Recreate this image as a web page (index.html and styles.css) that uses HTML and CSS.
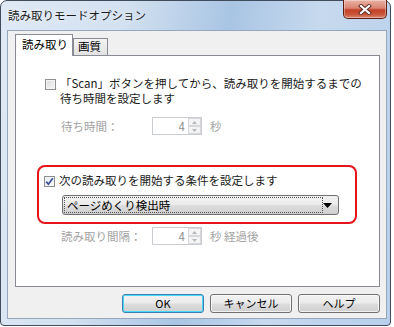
FILE: index.html
```html
<!DOCTYPE html>
<html lang="ja">
<head>
<meta charset="utf-8">
<link rel="stylesheet" href="styles.css">
</head>
<body>
<div class="window">
  <div class="titlebar">
    <span class="title">読み取りモードオプション</span>
    <div class="close">
      <svg width="14" height="11" viewBox="0 0 14 11">
        <path d="M3 2 L11 9 M11 2 L3 9" stroke="#5a2a22" stroke-width="4" stroke-linecap="square"/>
        <path d="M3 2 L11 9 M11 2 L3 9" stroke="#ffffff" stroke-width="2.2" stroke-linecap="square"/>
      </svg>
    </div>
  </div>
  <div class="client">
    <div class="tabs">
      <div class="tab active">読み取り</div>
      <div class="tab">画質</div>
    </div>
    <div class="panel">
      <div class="check-row">
        <span class="cb"></span>
        <span class="cb-label">「Scan」ボタンを押してから、読み取りを開始するまでの<br>待ち時間を設定します</span>
      </div>
      <div class="field">
        <span class="field-label">待ち時間：</span>
        <div class="spin">
          <span class="val">4</span>
          <div class="spin-btns">
            <span class="sb"><svg width="5" height="3" viewBox="0 0 5 3"><path d="M0 3 L2.5 0 L5 3Z" fill="#b5b8bd"/></svg></span>
            <span class="sb"><svg width="5" height="3" viewBox="0 0 5 3"><path d="M0 0 L2.5 3 L5 0Z" fill="#b5b8bd"/></svg></span>
          </div>
        </div>
        <span class="unit">秒</span>
      </div>
      <div class="highlight">
        <div class="check-row">
          <span class="cb checked">
            <svg width="9" height="9" viewBox="0 0 9 9"><path d="M1.2 4.6 L3.4 7.2 L7.8 1.2" fill="none" stroke="#3d5196" stroke-width="1.7"/></svg>
          </span>
          <span class="cb-label">次の読み取りを開始する条件を設定します</span>
        </div>
        <div class="select">
          <span class="focus">ページめくり検出時</span>
          <svg class="arrow" width="9" height="5" viewBox="0 0 9 5"><path d="M0 0 L9 0 L4.5 5Z" fill="#000"/></svg>
        </div>
      </div>
      <div class="field field2">
        <span class="field-label">読み取り間隔：</span>
        <div class="spin">
          <span class="val">4</span>
          <div class="spin-btns">
            <span class="sb"><svg width="5" height="3" viewBox="0 0 5 3"><path d="M0 3 L2.5 0 L5 3Z" fill="#b5b8bd"/></svg></span>
            <span class="sb"><svg width="5" height="3" viewBox="0 0 5 3"><path d="M0 0 L2.5 3 L5 0Z" fill="#b5b8bd"/></svg></span>
          </div>
        </div>
        <span class="unit">秒 経過後</span>
      </div>
    </div>
    <div class="buttons">
      <div class="btn default">OK</div>
      <div class="btn">キャンセル</div>
      <div class="btn">ヘルプ</div>
    </div>
  </div>
</div>
</body>
</html>
```

FILE: styles.css
```css
* { box-sizing: border-box; }

body {
  margin: 0;
  width: 394px;
  height: 327px;
  background: #ffffff;
  font-family: "Noto Sans CJK JP", "Noto Sans", sans-serif;
  font-size: 11.5px;
  color: #000;
}

.window {
  width: 391px;
  height: 326px;
  border: 1px solid #404b5c;
  border-radius: 7px 7px 4px 4px;
  background:
    linear-gradient(100deg, #dfe9f5 0%, #d3e1f0 28%, #a9c5e4 52%, #c6d9ee 72%, #b7cfea 100%);
  display: flex;
  flex-direction: column;
}

.titlebar {
  height: 29px;
  display: flex;
  align-items: center;
}

.title {
  margin-left: 7px;
  font-size: 11.5px;
  line-height: 15px;
  color: #1a1a1a;
  text-shadow: 0 0 5px rgba(255,255,255,0.9);
}

.close {
  margin-left: auto;
  margin-right: 3px;
  align-self: flex-start;
  margin-top: -1px;
  width: 44px;
  height: 19px;
  border: 1px solid #5e1c12;
  border-top: none;
  border-radius: 0 0 5px 5px;
  background: linear-gradient(#eab1a3 0%, #d98571 45%, #c24128 55%, #c9553b 80%, #dc8a72 100%);
  display: flex;
  align-items: center;
  justify-content: center;
  box-shadow: inset 0 0 0 1px rgba(255,255,255,0.35);
}

.client {
  margin-left: 6px;
  width: 380px;
  height: 289px;
  background: #f0f0f0;
  border: 1px solid #95a6bd;
  padding: 3px 0 0 7px;
  display: flex;
  flex-direction: column;
}

.tabs {
  display: flex;
  align-items: flex-end;
  height: 22px;
  position: relative;
  z-index: 1;
  margin-bottom: -1px;
}

.tab {
  height: 17px;
  padding: 0 6px 0 4px;
  border: 1px solid #898c95;
  border-bottom: none;
  background: linear-gradient(#f3f3f3, #e2e2e2);
  line-height: 15px;
  margin-bottom: 1px;
}

.tab.active {
  height: 22px;
  width: 58px;
  padding: 0 0 0 6px;
  background: #ffffff;
  margin-bottom: 0;
  line-height: 18px;
}

.panel {
  width: 365px;
  height: 232px;
  background: #ffffff;
  border: 1px solid #898c95;
  padding: 20px 0 0 29px;
  display: flex;
  flex-direction: column;
}

.check-row {
  display: flex;
  align-items: flex-start;
  line-height: 15px;
}

.cb {
  width: 11px;
  height: 11px;
  margin-top: 3px;
  margin-right: 4px;
  border: 1px solid #8e8f8f;
  background: linear-gradient(135deg, #dcdcdc, #f6f6f6);
  box-shadow: inset 0 0 0 1px #f4f4f4;
  display: flex;
  align-items: center;
  justify-content: center;
  flex: none;
}

.cb.checked {
  background: linear-gradient(135deg, #e8ecf3, #fbfbfb);
}

.cb-label {
  color: #1a1a1a;
}

.field {
  display: flex;
  align-items: center;
  margin-top: 11px;
  margin-left: 16px;
  color: #a3a3a3;
  height: 18px;
}

.field2 {
  margin-top: 3px;
}

.field-label {
  width: 91px;
}

.spin {
  width: 50px;
  height: 18px;
  border: 1px solid #c9ccd1;
  background: #ffffff;
  display: flex;
  align-items: stretch;
}

.val {
  flex: 1;
  text-align: right;
  padding-right: 3px;
  line-height: 16px;
  color: #8f8f8f;
}

.spin-btns {
  width: 13px;
  display: flex;
  flex-direction: column;
}

.sb {
  flex: 1;
  border: 1px solid #d6d8dc;
  background: #f4f4f4;
  display: flex;
  align-items: center;
  justify-content: center;
}

.unit {
  margin-left: 8px;
}

.highlight {
  margin-top: 30px;
  margin-left: -8px;
  width: 320px;
  height: 59px;
  border: 2px solid #e8141c;
  border-radius: 8px;
  padding: 6px 0 0 5px;
  display: flex;
  flex-direction: column;
}

.select {
  margin-top: 7px;
  margin-left: 18px;
  width: 277px;
  height: 20px;
  border: 1px solid #707070;
  border-radius: 3px;
  background: linear-gradient(#f2f2f2 0%, #ebebeb 48%, #dddddd 52%, #cfcfcf 100%);
  display: flex;
  align-items: center;
  padding: 0 4px 0 1px;
}

.focus {
  width: 259px;
  height: 16px;
  border: 1px dotted #555;
  line-height: 14px;
  padding-left: 2px;
  font-size: 11.5px;
}

.arrow {
  margin-left: auto;
  margin-right: 2px;
}

.buttons {
  display: flex;
  justify-content: flex-end;
  gap: 6px;
  margin-top: 7px;
  padding-right: 0;
  width: 365px;
}

.btn {
  width: 82px;
  height: 19px;
  border: 1px solid #707070;
  border-radius: 3px;
  background: linear-gradient(#f2f2f2 0%, #ebebeb 48%, #dddddd 52%, #cfcfcf 100%);
  text-align: center;
  line-height: 16px;
  font-size: 11px;
  box-shadow: inset 0 0 0 1px rgba(255,255,255,0.7);
}

.btn.default {
  border-color: #3c7fb1;
  box-shadow: inset 0 0 0 1px #48d8fb;
}
```
